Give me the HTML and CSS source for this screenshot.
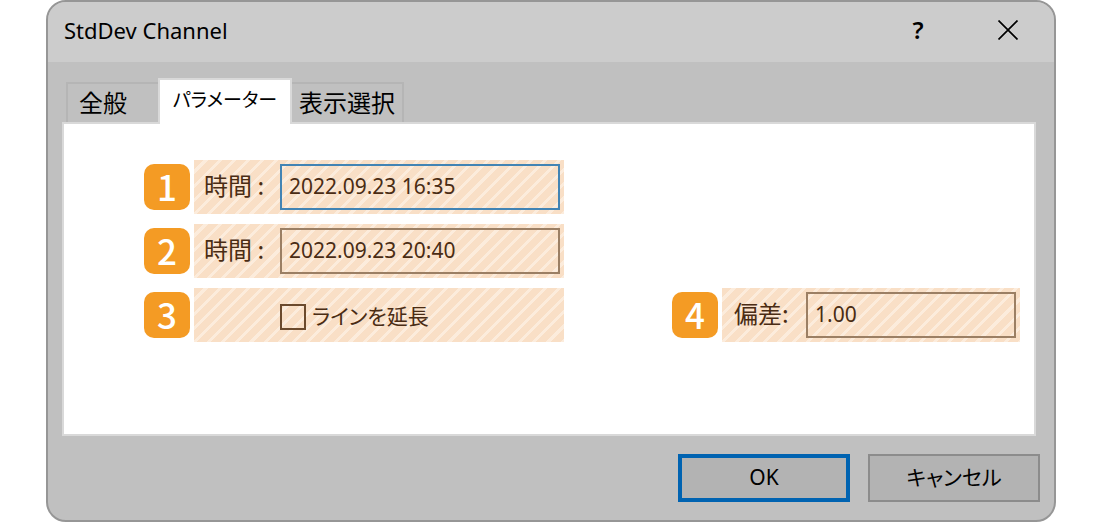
FILE: index.html
```html
<!DOCTYPE html>
<html lang="ja">
<head>
  <meta charset="utf-8">
  <title>StdDev Channel</title>
  <link rel="stylesheet" href="styles.css">
</head>

<body>
  <form class="dialog">
    <header class="title-bar">
      <h1>StdDev Channel</h1>
      <button type="button" class="icon-button help" aria-label="ヘルプ">?</button>
      <button type="button" class="icon-button" aria-label="閉じる">
        <svg width="20" height="20" viewBox="0 0 20 20"><path d="M0.5 0.5L19.5 19.5M19.5 0.5L0.5 19.5" stroke="#000" stroke-width="1.7" fill="none"/></svg>
      </button>
    </header>

    <div class="tabs" role="tablist">
      <button type="button" class="tab" role="tab">全般</button>
      <button type="button" class="tab active" role="tab" aria-selected="true">パラメーター</button>
      <button type="button" class="tab last" role="tab">表示選択</button>
    </div>

    <div class="panel">
      <div class="row">
        <span class="badge">1</span>
        <div class="field">
          <label for="time1">時間 :</label>
          <input type="text" id="time1" class="focused" value="2022.09.23 16:35">
        </div>
      </div>
      <div class="row">
        <span class="badge">2</span>
        <div class="field">
          <label for="time2">時間 :</label>
          <input type="text" id="time2" value="2022.09.23 20:40">
        </div>
      </div>
      <div class="row">
        <span class="badge">3</span>
        <div class="field check">
          <input type="checkbox" id="extend">
          <label for="extend">ラインを延長</label>
        </div>
        <div class="row right">
          <span class="badge">4</span>
          <div class="field deviation">
            <label for="deviation">偏差:</label>
            <input type="text" id="deviation" value="1.00">
          </div>
        </div>
      </div>
    </div>

    <footer class="buttons">
      <button type="submit" class="default">OK</button>
      <button type="button">キャンセル</button>
    </footer>
  </form>
</body>
</html>
```
FILE: styles.css
```css
* {
    box-sizing: border-box;
}

body {
    margin: 0;
    padding: 0 44px 0 46px;
    background: #fff;
    color: #000;
    font-family: "Noto Sans", "Noto Sans CJK JP", sans-serif;
    font-size: 21px;
    line-height: 32px;
}

button,
input {
    font: inherit;
    color: inherit;
}

.dialog {
    border: 2px solid #969696;
    border-radius: 20px;
    background: #c0c0c0;
    overflow: hidden;
}

.title-bar {
    display: flex;
    align-items: center;
    height: 60px;
    padding: 0 10px 4px 16px;
    background: #ccc;
}

.title-bar h1 {
    flex: 1;
    margin: 0;
    font-size: 22px;
    font-weight: normal;
}

.icon-button {
    display: flex;
    align-items: center;
    justify-content: center;
    width: 72px;
    height: 56px;
    margin-left: 18px;
    padding: 0;
    border: none;
    background: none;
}

.help {
    font-size: 24px;
    font-weight: 600;
}

.tabs {
    display: flex;
    align-items: flex-end;
    padding: 16px 18px 0;
}

.tab {
    width: 92px;
    height: 40px;
    padding: 0 20px 2px 0;
    border: 2px solid #b5b5b5;
    border-width: 2px 0 0 2px;
    background: none;
    font-family: "Noto Sans CJK JP", sans-serif;
    font-size: 24px;
}

.tab.active {
    position: relative;
    width: 134px;
    height: 46px;
    margin-bottom: -2px;
    padding: 0 0 6px;
    border: 2px solid #d9d9d9;
    border-bottom: none;
    background: #fff;
    font-feature-settings: "palt";
    font-size: 19px;
}

.tab.last {
    width: 112px;
    padding: 0 0 2px;
    border-width: 2px 2px 0 0;
}

.panel {
    display: flex;
    flex-direction: column;
    gap: 10px;
    min-height: 314px;
    margin: 0 18px 0 14px;
    padding: 36px 14px 36px 80px;
    border: 2px solid #d9d9d9;
    background: #fff;
}

.row {
    display: flex;
    align-items: center;
    gap: 4px;
}

.row.right {
    margin-left: auto;
}

.badge {
    width: 46px;
    height: 46px;
    border-radius: 10px;
    background: #f49b24;
    color: #fff;
    font-family: "Noto Sans CJK JP", sans-serif;
    font-size: 35px;
    font-weight: 500;
    line-height: 44px;
    text-align: center;
}

.field {
    display: flex;
    align-items: center;
    width: 370px;
    height: 54px;
    padding: 0 4px 0 10px;
    background: repeating-linear-gradient(135deg, #f9dfc6 0 7px, #fcecdc 7px 10px);
    color: #4a2c14;
}

.field label {
    width: 76px;
    padding-bottom: 4px;
    font-family: "Noto Sans CJK JP", sans-serif;
    font-size: 24px;
}

.field input[type=text] {
    flex: 1;
    min-width: 0;
    height: 46px;
    padding: 0 7px 2px;
    border: 2px solid #9b7f64;
    background: none;
    outline: none;
}

.field input.focused {
    border-color: #4384b4;
}

.check {
    gap: 6px;
    padding: 4px 4px 0 86px;
}

.field.check label {
    width: auto;
    font-feature-settings: "palt";
    font-size: 21px;
}

.check input {
    appearance: none;
    width: 26px;
    height: 26px;
    margin: 0;
    border: 2px solid #6b4a2d;
}

.deviation {
    width: 298px;
    padding-left: 12px;
}

.deviation label {
    width: 72px;
}

.buttons {
    display: flex;
    justify-content: flex-end;
    gap: 18px;
    padding: 18px 14px;
}

.buttons button {
    width: 172px;
    height: 48px;
    padding: 0 0 2px;
    border: 2px solid #8c8c8c;
    background: #b3b3b3;
    font-feature-settings: "palt";
}

.buttons .default {
    border: 4px solid #0063b1;
}
```
